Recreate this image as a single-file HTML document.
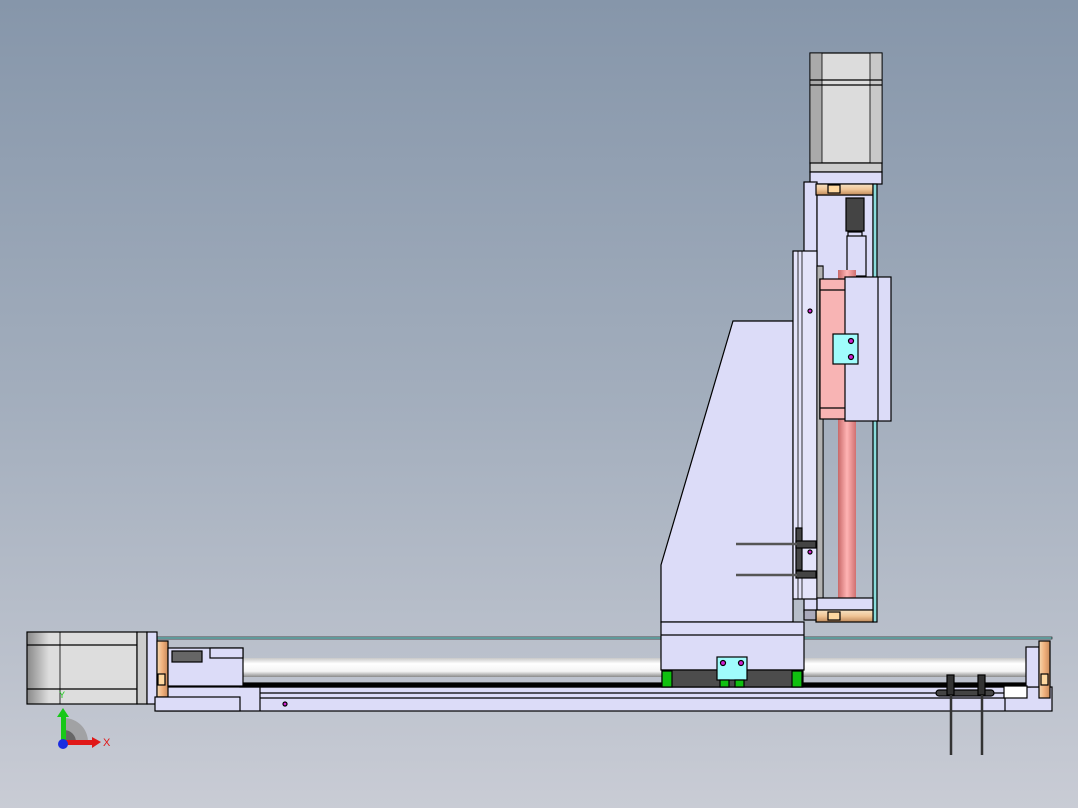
<!DOCTYPE html>
<html><head><meta charset="utf-8"><style>
html,body{margin:0;padding:0;width:1078px;height:808px;overflow:hidden}
svg{display:block}
</style></head><body>
<svg width="1078" height="808" viewBox="0 0 1078 808" xmlns="http://www.w3.org/2000/svg">
<defs>
<linearGradient id="bg" x1="0" y1="0" x2="0" y2="1">
<stop offset="0" stop-color="#8696aa"/><stop offset="0.5" stop-color="#a3aebd"/><stop offset="1" stop-color="#c9ccd5"/>
</linearGradient>
<linearGradient id="org" x1="0" y1="0" x2="0" y2="1">
<stop offset="0" stop-color="#f6e2c4"/><stop offset="0.5" stop-color="#f0c596"/><stop offset="1" stop-color="#c08a5a"/>
</linearGradient>
<linearGradient id="orgv" x1="0" y1="0" x2="1" y2="0">
<stop offset="0" stop-color="#f6d8b0"/><stop offset="0.5" stop-color="#f0b07c"/><stop offset="1" stop-color="#c88a5a"/>
</linearGradient>
<linearGradient id="red" x1="0" y1="0" x2="1" y2="0">
<stop offset="0" stop-color="#c86868"/><stop offset="0.5" stop-color="#ffb4b4"/><stop offset="1" stop-color="#d07070"/>
</linearGradient>
<linearGradient id="rod" x1="0" y1="0" x2="0" y2="1">
<stop offset="0" stop-color="#c8c8c8"/><stop offset="0.3" stop-color="#ffffff"/><stop offset="0.7" stop-color="#f4f4f4"/><stop offset="1" stop-color="#8a8a8a"/>
</linearGradient>
<linearGradient id="mot" x1="0" y1="0" x2="1" y2="0">
<stop offset="0" stop-color="#888"/><stop offset="0.2" stop-color="#ddd"/><stop offset="1" stop-color="#ddd"/>
</linearGradient>
</defs>
<rect width="1078" height="808" fill="url(#bg)"/>
<g stroke="#000" stroke-width="1.2">
<!-- vertical motor -->
<rect x="810" y="53" width="72" height="110" fill="#dcdcdc"/>
<rect x="810" y="53" width="12" height="110" fill="#aaa" stroke-width="0.8"/>
<rect x="870" y="53" width="12" height="110" fill="#c8c8c8" stroke-width="0.8"/>
<line x1="810" y1="80" x2="882" y2="80"/><line x1="810" y1="85" x2="882" y2="85"/>
<rect x="810" y="163" width="72" height="9" fill="#ccc"/>
<rect x="810" y="172" width="72" height="12" fill="#dcdcf8"/>
<!-- column left plate -->
<rect x="804" y="182" width="13" height="430" fill="#dcdcf8"/>
<!-- column body -->
<rect x="817" y="195" width="56" height="85" fill="#dcdcf8"/>
<rect x="846" y="198" width="18" height="33" fill="#444"/>
<rect x="848" y="232" width="14" height="12" fill="#dcdcf8"/>
<rect x="847" y="236" width="19" height="40" fill="#dcdcf8"/>
<rect x="816" y="184" width="57" height="11" fill="url(#org)"/>
<rect x="828" y="185" width="12" height="8" fill="#ffd8a0"/>
<rect x="873" y="184" width="4" height="438" fill="#8adcdc"/>
<!-- gantry plate -->
<polygon points="733,321 793,321 793,622 661,622 661,565" fill="#dcdcf8"/>
<!-- vertical rail -->
<rect x="793" y="251" width="24" height="348" fill="#e4e4fa"/>
<line x1="798" y1="251" x2="798" y2="599" stroke-width="0.8"/>
<line x1="802" y1="251" x2="802" y2="599" stroke-width="0.8"/>
<!-- red screw -->
<rect x="838" y="270" width="18" height="340" fill="url(#red)" stroke="none"/>
<!-- ribbed strip -->
<rect x="817" y="266" width="6" height="333" fill="#fff"/>
<line x1="819" y1="266" x2="819" y2="599" stroke-width="0.6"/>
<line x1="821" y1="266" x2="821" y2="599" stroke-width="0.6"/>
<!-- pink carriage -->
<rect x="820" y="279" width="29" height="140" fill="#f8b4b4"/>
<line x1="820" y1="290" x2="849" y2="290"/><line x1="820" y1="408" x2="849" y2="408"/>
<rect x="845" y="277" width="46" height="144" fill="#dcdcf8"/>
<line x1="878" y1="277" x2="878" y2="421"/>
<rect x="833" y="334" width="25" height="30" fill="#a0fcfc"/>
<circle cx="851" cy="341" r="2.5" fill="#d020d0"/><circle cx="851" cy="357" r="2.5" fill="#d020d0"/>
<circle cx="810" cy="311" r="2" fill="#d020d0"/>
<!-- bottom bearing column -->
<rect x="817" y="598" width="56" height="12" fill="#dcdcf8"/>
<rect x="816" y="610" width="57" height="12" fill="url(#org)"/>
<rect x="828" y="612" width="12" height="8" fill="#ffd8a0"/>
<rect x="804" y="610" width="12" height="10" fill="#aab"/>
<!-- sensor brackets on column -->
<rect x="796" y="528" width="6" height="42" fill="#444"/>
<rect x="796" y="541" width="20" height="7" fill="#444"/>
<rect x="796" y="571" width="20" height="7" fill="#444"/>
<circle cx="810" cy="552" r="2" fill="#d020d0"/>
</g>
<g stroke="#555" stroke-width="2.5"><line x1="736" y1="544" x2="797" y2="544"/><line x1="736" y1="575" x2="797" y2="575"/></g>
<g stroke="#000" stroke-width="1.2">
<!-- horizontal axis -->
<rect x="157" y="637" width="895" height="2" fill="#8adcdc" stroke-width="0.6"/>
<rect x="240" y="658" width="790" height="19" fill="url(#rod)" stroke="none"/>
<rect x="157" y="687" width="895" height="24" fill="#dcdcf8"/>
<line x1="260" y1="698" x2="1005" y2="698"/><line x1="260" y1="693" x2="1005" y2="693"/>
<line x1="260" y1="687" x2="260" y2="711"/><line x1="1005" y1="687" x2="1005" y2="711"/>
<rect x="240" y="683" width="790" height="4" fill="#000"/>
<circle cx="285" cy="704" r="2" fill="#d020d0"/>
<!-- gantry base block -->
<rect x="661" y="622" width="143" height="48" fill="#dcdcf8"/>
<line x1="661" y1="635" x2="804" y2="635"/>
<rect x="662" y="670" width="141" height="17" fill="#4c4c4c"/>
<rect x="662" y="671" width="10" height="16" fill="#10c010"/>
<rect x="792" y="671" width="10" height="16" fill="#10c010"/>
<rect x="717" y="657" width="30" height="23" fill="#a0fcfc"/>
<rect x="720" y="680" width="9" height="7" fill="#10c010"/>
<rect x="735" y="680" width="9" height="7" fill="#10c010"/>
<circle cx="723" cy="663" r="2.5" fill="#d020d0"/><circle cx="741" cy="663" r="2.5" fill="#d020d0"/>
<!-- left motor -->
<rect x="27" y="632" width="110" height="72" fill="url(#mot)"/>
<line x1="27" y1="645" x2="137" y2="645"/><line x1="27" y1="689" x2="137" y2="689"/>
<line x1="60" y1="632" x2="60" y2="704" stroke-width="0.8"/>
<rect x="137" y="632" width="10" height="72" fill="#ccc"/>
<rect x="147" y="632" width="10" height="72" fill="#dcdcf8"/>
<rect x="157" y="641" width="11" height="56" fill="url(#orgv)"/>
<rect x="158" y="674" width="7" height="11" fill="#ffd8a0"/>
<rect x="155" y="697" width="85" height="14" fill="#dcdcf8"/>
<rect x="168" y="648" width="75" height="38" fill="#dcdcf8"/>
<rect x="172" y="651" width="30" height="11" fill="#666"/>
<rect x="210" y="648" width="33" height="10" fill="#dcdcf8"/>
<!-- right end -->
<rect x="1026" y="647" width="13" height="40" fill="#dcdcf8"/>
<rect x="1039" y="641" width="11" height="57" fill="url(#orgv)"/>
<rect x="1041" y="674" width="7" height="11" fill="#ffd8a0"/>
<rect x="1004" y="686" width="23" height="12" fill="#fff"/>
<!-- sensors -->
<rect x="936" y="690" width="58" height="6" rx="3" fill="#444"/>
<rect x="947" y="675" width="7" height="20" fill="#333"/>
<rect x="978" y="675" width="7" height="20" fill="#333"/>
</g>
<g stroke="#333" stroke-width="2.5"><line x1="951" y1="695" x2="951" y2="755"/><line x1="982" y1="695" x2="982" y2="755"/></g>
<!-- triad -->
<path d="M64 742 L64 718 A24 24 0 0 1 88 742 Z" fill="#999" opacity="0.8"/>
<path d="M64 742 L64 730 A12 12 0 0 1 76 742 Z" fill="#666"/>
<rect x="61" y="716" width="5" height="24" fill="#18c818"/>
<polygon points="57,717 63,708 69,717" fill="#18c818"/>
<rect x="66" y="740" width="26" height="5" fill="#e01818"/>
<polygon points="92,737 101,742 92,748" fill="#e01818"/>
<circle cx="63" cy="744" r="5" fill="#1a2ce0"/>
<text x="103" y="746" font-family="Liberation Sans, sans-serif" font-size="11" fill="#e01818">X</text>
<text x="59" y="698" font-family="Liberation Sans, sans-serif" font-size="9" fill="#18c818">Y</text>
</svg>
</body></html>
